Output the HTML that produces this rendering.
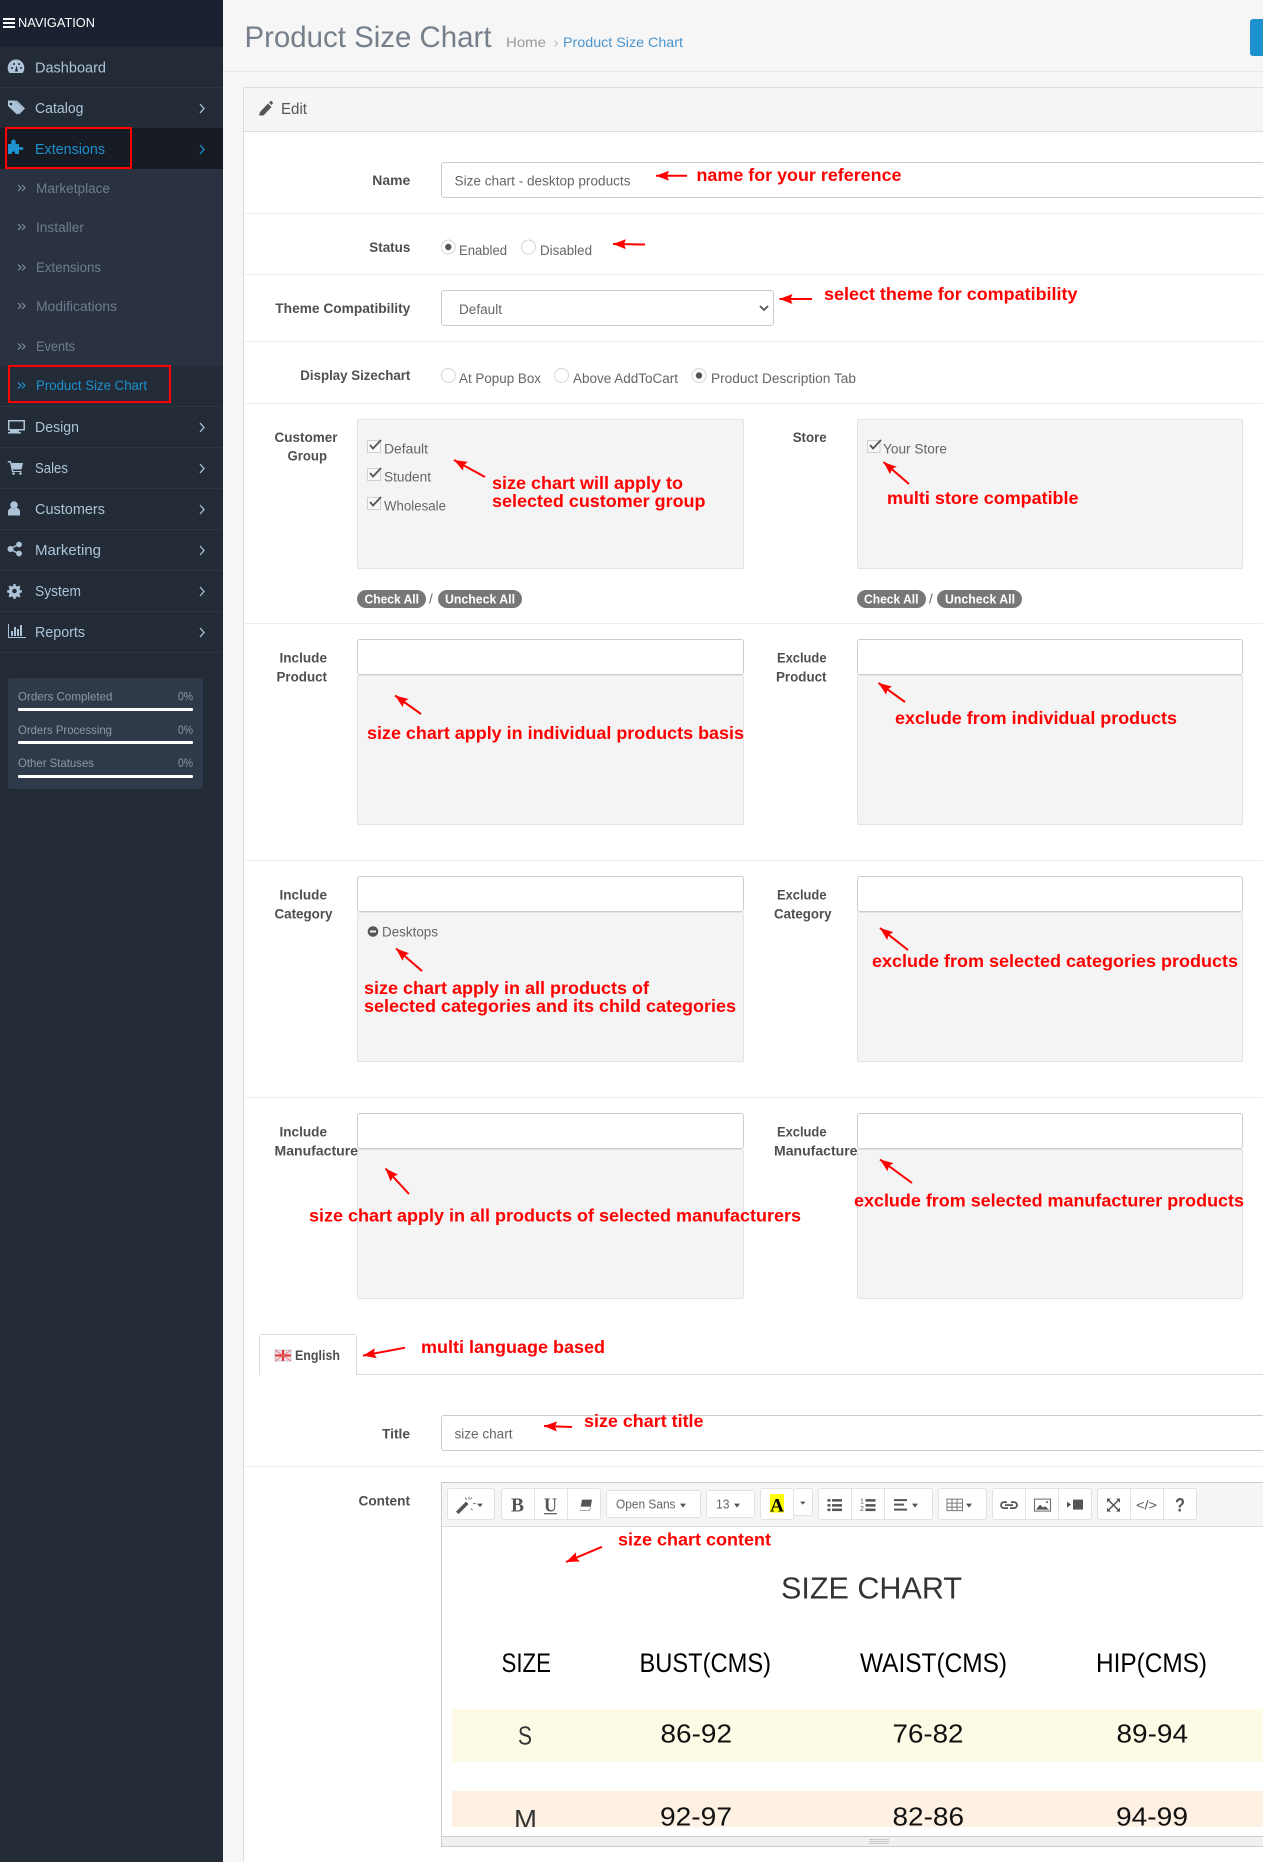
<!DOCTYPE html>
<html><head><meta charset="utf-8"><title>Product Size Chart</title>
<style>
*{box-sizing:border-box}
html,body{margin:0;padding:0}
body{width:1263px;height:1862px;overflow:hidden;position:relative;background:#f6f6f6;font-family:"Liberation Sans",sans-serif}
.a{position:absolute}
.sep{position:absolute;left:0;width:223px;height:1px;background:#2b3643}
.hr{position:absolute;left:244px;right:0;height:1px;background:#ededed}
.in{position:absolute;background:#fff;border:1.5px solid #ccc;border-radius:3px}
.box{position:absolute;background:#f4f4f4;border:1px solid #e3e3e3;border-radius:2px}
.pill{position:absolute;background:#777;border-radius:9px;height:18px;top:590px}
.bar{position:absolute;left:18px;width:175px;height:3px;background:#fff;border-radius:1px}
.tb{position:absolute;background:#fff;border:1px solid #e2e2e2;border-radius:3px}
.dv{position:absolute;width:1px;background:#e2e2e2;top:1489px;height:31px}
#ov{position:absolute;left:0;top:0}
#ov text{font-family:"Liberation Sans",sans-serif}
.m{font-size:15px;fill:#adc4d8}
.s{font-size:13.5px;fill:#6f7c8e}
.st{font-size:12px;fill:#8f98a3}
.lb{font-size:13.5px;font-weight:bold;fill:#4d4f52}
.t{font-size:13.5px;fill:#666}
.r{font-size:17.5px;font-weight:bold;fill:#f00}
.w{font-size:13px;font-weight:bold;fill:#fff}
.h{font-size:27px;fill:#000}
.n{font-size:26px;fill:#111}
</style></head>
<body>
<!-- sidebar -->
<div class="a" style="left:0;top:0;width:223px;height:1862px;background:#222b36"></div>
<div class="a" style="left:0;top:0;width:223px;height:47px;background:#1a2130"></div>
<div class="a" style="left:0;top:128px;width:223px;height:41px;background:#161b24"></div>
<div class="a" style="left:0;top:169px;width:223px;height:197px;background:#2a3242"></div>
<div class="sep" style="top:87px"></div>
<div class="sep" style="top:406px"></div><div class="sep" style="top:447px"></div><div class="sep" style="top:488px"></div>
<div class="sep" style="top:529px"></div><div class="sep" style="top:570px"></div><div class="sep" style="top:611px"></div><div class="sep" style="top:652px"></div>
<div class="a" style="left:8px;top:678px;width:195px;height:111px;background:#2e3a4a;border-radius:3px"></div>
<div class="bar" style="top:708px"></div><div class="bar" style="top:741px"></div><div class="bar" style="top:775px"></div>
<div class="a" style="left:5px;top:127px;width:127px;height:42px;border:2px solid #f00"></div>
<div class="a" style="left:8px;top:365px;width:163px;height:38px;border:2px solid #f00"></div>

<!-- header -->
<div class="a" style="left:223px;top:71px;right:0;height:1px;background:#e6e6e6"></div>
<div class="a" style="left:1250px;top:19px;width:13px;height:37px;background:#1e91cf;border-radius:3px 0 0 3px"></div>

<!-- panel -->
<div class="a" style="left:243px;top:87px;width:1020px;height:1775px;background:#fff;border-left:1.5px solid #ddd;border-top:1px solid #ddd"></div>
<div class="a" style="left:244px;top:88px;width:1019px;height:44px;background:#f5f5f5;border-bottom:1px solid #ddd"></div>
<div class="hr" style="top:213px"></div><div class="hr" style="top:274px"></div><div class="hr" style="top:341px"></div>
<div class="hr" style="top:403px"></div><div class="hr" style="top:623px"></div><div class="hr" style="top:860px"></div>
<div class="hr" style="top:1097px"></div><div class="hr" style="top:1466px"></div>

<div class="in" style="left:441px;top:162px;width:840px;height:36px"></div>
<div class="in" style="left:441px;top:290px;width:333px;height:36px"></div>

<div class="box" style="left:357px;top:419px;width:387px;height:150px"></div>
<div class="box" style="left:857px;top:419px;width:386px;height:150px"></div>
<div class="pill" style="left:357px;width:69px"></div><div class="pill" style="left:438px;width:84px"></div>
<div class="pill" style="left:857px;width:69px"></div><div class="pill" style="left:937px;width:85px"></div>

<div class="box" style="left:357px;top:675px;width:387px;height:150px"></div><div class="in" style="left:357px;top:639px;width:387px;height:36px"></div>
<div class="box" style="left:857px;top:675px;width:386px;height:150px"></div><div class="in" style="left:857px;top:639px;width:386px;height:36px"></div>
<div class="box" style="left:357px;top:912px;width:387px;height:150px"></div><div class="in" style="left:357px;top:876px;width:387px;height:36px"></div>
<div class="box" style="left:857px;top:912px;width:386px;height:150px"></div><div class="in" style="left:857px;top:876px;width:386px;height:36px"></div>
<div class="box" style="left:357px;top:1149px;width:387px;height:150px"></div><div class="in" style="left:357px;top:1113px;width:387px;height:36px"></div>
<div class="box" style="left:857px;top:1149px;width:386px;height:150px"></div><div class="in" style="left:857px;top:1113px;width:386px;height:36px"></div>

<!-- tab -->
<div class="a" style="left:356px;top:1374px;right:0;height:1px;background:#ddd"></div>
<div class="a" style="left:259px;top:1334px;width:98px;height:41px;background:#fff;border:1px solid #ddd;border-bottom:0;border-radius:3px 3px 0 0"></div>

<div class="in" style="left:441px;top:1415px;width:840px;height:36px"></div>

<!-- editor -->
<div class="a" style="left:441px;top:1482px;width:830px;height:365px;background:#fff;border:1.5px solid #ccc"></div>
<div class="a" style="left:442px;top:1483px;width:825px;height:44px;background:#f5f5f5;border-bottom:1px solid #ddd"></div>
<div class="a" style="left:442px;top:1836px;width:825px;height:10px;background:#f0f0f0;border-top:1px solid #ccc"></div>
<div class="tb" style="left:447px;top:1488px;width:48px;height:32px"></div>
<div class="tb" style="left:501px;top:1488px;width:100px;height:32px"></div><div class="dv" style="left:534px"></div><div class="dv" style="left:567px"></div>
<div class="tb" style="left:606px;top:1490px;width:95px;height:28px"></div>
<div class="tb" style="left:706px;top:1490px;width:49px;height:28px"></div>
<div class="tb" style="left:793px;top:1488px;width:20px;height:28px"></div>
<div class="tb" style="left:760px;top:1488px;width:34px;height:32px"></div>
<div class="tb" style="left:818px;top:1488px;width:115px;height:32px"></div><div class="dv" style="left:851px"></div><div class="dv" style="left:884px"></div>
<div class="tb" style="left:938px;top:1488px;width:49px;height:32px"></div>
<div class="tb" style="left:992px;top:1488px;width:100px;height:32px"></div><div class="dv" style="left:1025px"></div><div class="dv" style="left:1058px"></div>
<div class="tb" style="left:1097px;top:1488px;width:100px;height:32px"></div><div class="dv" style="left:1130px"></div><div class="dv" style="left:1163px"></div>

<!-- size chart rows -->
<div class="a" style="left:452px;top:1709px;width:811px;height:53px;background:#fdfbe5"></div>
<div class="a" style="left:452px;top:1791px;width:811px;height:36px;background:#fef0e3"></div>

<svg id="ov" width="1263" height="1862" viewBox="0 0 1263 1862" xmlns="http://www.w3.org/2000/svg">
<defs><marker id="ah" markerUnits="userSpaceOnUse" markerWidth="14" markerHeight="11" refX="13" refY="5" orient="auto"><path d="M13 5L0 0L2 5L0 10z" fill="#f00"/></marker></defs>

<!-- sidebar text -->
<rect x="3" y="18" width="12" height="2" fill="#fff"/><rect x="3" y="22" width="12" height="2" fill="#fff"/><rect x="3" y="26" width="12" height="2" fill="#fff"/>
<text x="18" y="27" font-size="13" fill="#fff" textLength="77" lengthAdjust="spacingAndGlyphs">NAVIGATION</text>
<text class="m" x="35" y="72.6" textLength="71" lengthAdjust="spacingAndGlyphs">Dashboard</text>
<text class="m" x="35" y="113" textLength="48.5" lengthAdjust="spacingAndGlyphs">Catalog</text>
<text class="m" x="35" y="154" textLength="70" lengthAdjust="spacingAndGlyphs" style="fill:#1e91cf">Extensions</text>
<text class="s" x="36" y="193" textLength="74" lengthAdjust="spacingAndGlyphs">Marketplace</text>
<text class="s" x="36" y="232" textLength="48" lengthAdjust="spacingAndGlyphs">Installer</text>
<text class="s" x="36" y="272" textLength="65" lengthAdjust="spacingAndGlyphs">Extensions</text>
<text class="s" x="36" y="311" textLength="81" lengthAdjust="spacingAndGlyphs">Modifications</text>
<text class="s" x="36" y="351" textLength="39" lengthAdjust="spacingAndGlyphs">Events</text>
<text class="s" x="36" y="390" textLength="111" lengthAdjust="spacingAndGlyphs" style="fill:#1e91cf">Product Size Chart</text>
<text class="m" x="35" y="432" textLength="44" lengthAdjust="spacingAndGlyphs">Design</text>
<text class="m" x="35" y="473" textLength="33" lengthAdjust="spacingAndGlyphs">Sales</text>
<text class="m" x="35" y="514" textLength="70" lengthAdjust="spacingAndGlyphs">Customers</text>
<text class="m" x="35" y="555" textLength="66" lengthAdjust="spacingAndGlyphs">Marketing</text>
<text class="m" x="35" y="596" textLength="46" lengthAdjust="spacingAndGlyphs">System</text>
<text class="m" x="35" y="637" textLength="50" lengthAdjust="spacingAndGlyphs">Reports</text>
<text class="st" x="18" y="700.7" textLength="94.5" lengthAdjust="spacingAndGlyphs">Orders Completed</text>
<text class="st" x="178" y="700.7" textLength="15" lengthAdjust="spacingAndGlyphs">0%</text>
<text class="st" x="18" y="734" textLength="94" lengthAdjust="spacingAndGlyphs">Orders Processing</text>
<text class="st" x="178" y="734" textLength="15" lengthAdjust="spacingAndGlyphs">0%</text>
<text class="st" x="18" y="767" textLength="76" lengthAdjust="spacingAndGlyphs">Other Statuses</text>
<text class="st" x="178" y="767" textLength="15" lengthAdjust="spacingAndGlyphs">0%</text>

<!-- sidebar chevrons -->
<g fill="none" stroke="#adc4d8" stroke-width="1.3">
<path d="M200 104l4 4.5l-4 4.5"/><path d="M200 145l4 4.5l-4 4.5" stroke="#1e91cf"/><path d="M200 423l4 4.5l-4 4.5"/><path d="M200 464l4 4.5l-4 4.5"/><path d="M200 505l4 4.5l-4 4.5"/><path d="M200 546l4 4.5l-4 4.5"/><path d="M200 587l4 4.5l-4 4.5"/><path d="M200 628l4 4.5l-4 4.5"/>
</g>
<!-- sub chevrons -->
<g fill="none" stroke="#7f8b9c" stroke-width="1.2">
<path d="M18 185l3 3l-3 3M22 185l3 3l-3 3"/><path d="M18 224l3 3l-3 3M22 224l3 3l-3 3"/><path d="M18 264.5l3 3l-3 3M22 264.5l3 3l-3 3"/><path d="M18 303l3 3l-3 3M22 303l3 3l-3 3"/><path d="M18 343.5l3 3l-3 3M22 343.5l3 3l-3 3"/>
<path d="M18 382.5l3 3l-3 3M22 382.5l3 3l-3 3" stroke="#1e91cf"/>
</g>
<!-- sidebar icons -->
<g fill="#adc4d8">
<path d="M9.5 73A8.3 8.3 0 1 1 22.5 73z"/><circle cx="12" cy="68" r="1" fill="#222b36"/><circle cx="14" cy="64" r="1" fill="#222b36"/><circle cx="19" cy="64" r="1" fill="#222b36"/><circle cx="21" cy="68" r="1" fill="#222b36"/><path d="M15 71.5l1.5-6l1.5 6z" fill="#222b36"/>
<path d="M8 100.5h7l8 8l-6 6l-9-8.5z"/><path d="M17 100.5l8 8l-6 6l-1-1l5-5l-7.5-8z"/><circle cx="11" cy="104" r="1.3" fill="#222b36"/>
<path d="M8 144h3.500c-1-3 .5-4.500 2-4.500s3 1.500 2 4.500h3.500v3.500c2-1 4.500-.5 4.500 1s-2.500 2-4.500 1v4.500h-4c.5-1.500-.5-2.500-1.500-2.500s-2 1-1.500 2.500h-4z" fill="#1e91cf"/>
<path d="M8 420h17v10.500h-6v1.500h2v1.500h-13v-1.500h2v-1.500h-2z"/><rect x="9.500" y="421.500" width="14" height="7.500" fill="#222b36"/>
<path d="M8 461h3l.6 2h11.400l-1.500 6.500h-8.500l.4 1.500h8.100v1h-9.500l-2-9.500h-2.500z"/><circle cx="13.500" cy="473.500" r="1.300"/><circle cx="20.500" cy="473.500" r="1.300"/>
<circle cx="14" cy="505" r="3.800"/><path d="M8 515v-3.500c0-2 2-3.500 3.500-3.500l2.500 1l2.500-1c1.500 0 3.500 1.500 3.500 3.500v3.500q0 .5-1 .5h-10q-1 0-1-.5z"/>
<circle cx="10.500" cy="549" r="3"/><circle cx="19" cy="544.500" r="2.900"/><circle cx="19" cy="553.500" r="2.900"/><path d="M10 548l9-4.500l.6 1.200l-9 4.500zM10 550l9 4.500l.6-1.200l-9-4.500z"/>
<path d="M13.500 584h2l.4 2l1.500.6l1.700-1.100l1.400 1.400l-1.100 1.700l.6 1.500l2 .4v2l-2 .4l-.6 1.500l1.100 1.700l-1.400 1.400l-1.700-1.100l-1.500.6l-.4 2h-2l-.4-2l-1.500-.6l-1.700 1.100l-1.400-1.400l1.100-1.700l-.6-1.500l-2-.4v-2l2-.4l.6-1.500l-1.100-1.700l1.400-1.400l1.700 1.100l1.500-.6z"/><circle cx="14.500" cy="591" r="2.300" fill="#222b36"/>
<path d="M8 624h1v13h17v1h-18z"/><rect x="11" y="631" width="2" height="5"/><rect x="14" y="627" width="2" height="9"/><rect x="17" y="629" width="2" height="7"/><rect x="20" y="625" width="2" height="11"/>
</g>

<!-- header text -->
<text x="244.500" y="47" font-size="30" fill="#75808c" textLength="247" lengthAdjust="spacingAndGlyphs">Product Size Chart</text>
<text x="506" y="47" font-size="14" fill="#999" textLength="40" lengthAdjust="spacingAndGlyphs">Home</text>
<path d="M554.500 40.500l3 3l-3 3" fill="none" stroke="#bbb"/>
<text x="563" y="47" font-size="14" fill="#4a95cf" textLength="120" lengthAdjust="spacingAndGlyphs">Product Size Chart</text>
<path d="M259 115.500l1-3.500l8-8.500l3.500 3.500l-8 8.500zM269 102.500l1-1c1-1 2-.5 2.500.5s.5 1.500-.5 2.500l-.5.5z" fill="#555"/>
<text x="281" y="114" font-size="15.500" fill="#555" textLength="26" lengthAdjust="spacingAndGlyphs">Edit</text>

<!-- labels -->
<text class="lb" x="372.300" y="185" textLength="38" lengthAdjust="spacingAndGlyphs">Name</text>
<text class="lb" x="369.300" y="252" textLength="41" lengthAdjust="spacingAndGlyphs">Status</text>
<text class="lb" x="275.300" y="313" textLength="135" lengthAdjust="spacingAndGlyphs">Theme Compatibility</text>
<text class="lb" x="300.300" y="380" textLength="110" lengthAdjust="spacingAndGlyphs">Display Sizechart</text>
<text class="lb" x="274.500" y="442" textLength="63" lengthAdjust="spacingAndGlyphs">Customer</text>
<text class="lb" x="287.500" y="460.500" textLength="39.500" lengthAdjust="spacingAndGlyphs">Group</text>
<text class="lb" x="792.700" y="442" textLength="34" lengthAdjust="spacingAndGlyphs">Store</text>
<text class="lb" x="279.500" y="662.700" textLength="47.500" lengthAdjust="spacingAndGlyphs">Include</text>
<text class="lb" x="276.500" y="681.700" textLength="50.500" lengthAdjust="spacingAndGlyphs">Product</text>
<text class="lb" x="777" y="662.700" textLength="49.500" lengthAdjust="spacingAndGlyphs">Exclude</text>
<text class="lb" x="776" y="681.700" textLength="50.500" lengthAdjust="spacingAndGlyphs">Product</text>
<text class="lb" x="279.500" y="899.300" textLength="47.500" lengthAdjust="spacingAndGlyphs">Include</text>
<text class="lb" x="274.500" y="918.300" textLength="58" lengthAdjust="spacingAndGlyphs">Category</text>
<text class="lb" x="777" y="899.300" textLength="49.500" lengthAdjust="spacingAndGlyphs">Exclude</text>
<text class="lb" x="774" y="918.300" textLength="57.500" lengthAdjust="spacingAndGlyphs">Category</text>
<text class="lb" x="279.500" y="1136.700" textLength="47.500" lengthAdjust="spacingAndGlyphs">Include</text>
<text class="lb" x="274.500" y="1155.700" textLength="83.500" lengthAdjust="spacingAndGlyphs">Manufacture</text>
<text class="lb" x="777" y="1136.700" textLength="49.500" lengthAdjust="spacingAndGlyphs">Exclude</text>
<text class="lb" x="774" y="1155.700" textLength="83.500" lengthAdjust="spacingAndGlyphs">Manufacture</text>
<text class="lb" x="295" y="1360" textLength="45" lengthAdjust="spacingAndGlyphs">English</text>
<text class="lb" x="382" y="1438.600" textLength="28" lengthAdjust="spacingAndGlyphs">Title</text>
<text class="lb" x="358.500" y="1505.600" textLength="51.500" lengthAdjust="spacingAndGlyphs">Content</text>

<!-- field text -->
<text class="t" x="454.500" y="185.300" textLength="176" lengthAdjust="spacingAndGlyphs">Size chart - desktop products</text>
<text class="t" x="459" y="255" textLength="48" lengthAdjust="spacingAndGlyphs">Enabled</text>
<text class="t" x="540" y="255" textLength="52" lengthAdjust="spacingAndGlyphs">Disabled</text>
<text class="t" x="459" y="314" textLength="43" lengthAdjust="spacingAndGlyphs">Default</text>
<text class="t" x="459" y="383" textLength="82" lengthAdjust="spacingAndGlyphs">At Popup Box</text>
<text class="t" x="573" y="383" textLength="105" lengthAdjust="spacingAndGlyphs">Above AddToCart</text>
<text class="t" x="711" y="383" textLength="145" lengthAdjust="spacingAndGlyphs">Product Description Tab</text>
<text class="t" x="384" y="453.300" textLength="44" lengthAdjust="spacingAndGlyphs">Default</text>
<text class="t" x="384" y="481.700" textLength="47" lengthAdjust="spacingAndGlyphs">Student</text>
<text class="t" x="384" y="510.300" textLength="62" lengthAdjust="spacingAndGlyphs">Wholesale</text>
<text class="t" x="883" y="453.300" textLength="64" lengthAdjust="spacingAndGlyphs">Your Store</text>
<text class="t" x="382" y="936.700" textLength="56" lengthAdjust="spacingAndGlyphs">Desktops</text>
<text class="t" x="454.500" y="1438.600" textLength="58" lengthAdjust="spacingAndGlyphs">size chart</text>
<text class="w" x="364.500" y="603.300" textLength="54.500" lengthAdjust="spacingAndGlyphs">Check All</text>
<text class="t" x="429" y="603.300">/</text>
<text class="w" x="445" y="603.300" textLength="70" lengthAdjust="spacingAndGlyphs">Uncheck All</text>
<text class="w" x="864" y="603.300" textLength="54.500" lengthAdjust="spacingAndGlyphs">Check All</text>
<text class="t" x="929" y="603.300">/</text>
<text class="w" x="945" y="603.300" textLength="70" lengthAdjust="spacingAndGlyphs">Uncheck All</text>

<!-- radios -->
<g fill="#fff" stroke="#d5d5d5">
<circle cx="448.300" cy="247" r="7"/><circle cx="528.500" cy="247" r="7"/><circle cx="448.300" cy="375.500" r="7"/><circle cx="561.500" cy="375.500" r="7"/><circle cx="699" cy="375.500" r="7"/>
</g>
<circle cx="448.300" cy="247" r="3.200" fill="#555"/><circle cx="699" cy="375.500" r="3.200" fill="#555"/>
<!-- select chevron -->
<path d="M760 306l4 4l4-4" fill="none" stroke="#555" stroke-width="1.800"/>

<!-- checkboxes -->
<g fill="#f8f8f8" stroke="#d0d0d0"><rect x="367.500" y="440.500" width="13" height="12"/><rect x="367.500" y="468.500" width="13" height="12"/><rect x="367.500" y="497.500" width="13" height="12"/><rect x="867.500" y="440.500" width="12.500" height="12"/></g>
<g fill="none" stroke="#555" stroke-width="1.800"><path d="M370 445l3 3.500l8-8.500"/><path d="M370 473l3 3.500l8-8.500"/><path d="M370 502l3 3.500l8-8.500"/><path d="M870 445l3 3.500l8-8.500"/></g>
<circle cx="373" cy="931.500" r="5.300" fill="#555"/><rect x="370" y="930.500" width="6" height="2" fill="#f4f4f4"/>

<!-- flag -->
<rect x="275" y="1350" width="16" height="11" fill="#f3dfe6" stroke="#aab" stroke-width=".6"/><path d="M275 1355.500h16M283 1350v11" stroke="#d33" stroke-width="2"/><path d="M275 1350l16 11M291 1350l-16 11" stroke="#d77" stroke-width=".8"/>

<!-- red annotations -->
<g stroke="#f00" stroke-width="2" fill="none">
<line x1="687" y1="175.700" x2="656" y2="175.700" marker-end="url(#ah)"/>
<line x1="645" y1="244.500" x2="613" y2="244" marker-end="url(#ah)"/>
<line x1="812" y1="299" x2="779.500" y2="299" marker-end="url(#ah)"/>
<line x1="485" y1="477" x2="454" y2="460" marker-end="url(#ah)"/>
<line x1="909" y1="484" x2="883.500" y2="462" marker-end="url(#ah)"/>
<line x1="421" y1="714" x2="395" y2="695.500" marker-end="url(#ah)"/>
<line x1="905" y1="702" x2="878.500" y2="683" marker-end="url(#ah)"/>
<line x1="422" y1="971" x2="396" y2="948.500" marker-end="url(#ah)"/>
<line x1="908" y1="950" x2="880" y2="928" marker-end="url(#ah)"/>
<line x1="409" y1="1194" x2="385.500" y2="1168.500" marker-end="url(#ah)"/>
<line x1="912" y1="1183" x2="880" y2="1159.500" marker-end="url(#ah)"/>
<line x1="405" y1="1347.700" x2="363" y2="1355.600" marker-end="url(#ah)"/>
<line x1="572" y1="1427" x2="544" y2="1426" marker-end="url(#ah)"/>
<line x1="602" y1="1546.800" x2="566" y2="1562" marker-end="url(#ah)"/>
</g>
<text class="r" x="696.500" y="181" textLength="205" lengthAdjust="spacingAndGlyphs">name for your reference</text>
<text class="r" x="824" y="300" textLength="253.500" lengthAdjust="spacingAndGlyphs">select theme for compatibility</text>
<text class="r" x="492" y="489" textLength="191" lengthAdjust="spacingAndGlyphs">size chart will apply to</text>
<text class="r" x="492" y="507" textLength="213.500" lengthAdjust="spacingAndGlyphs">selected customer group</text>
<text class="r" x="887" y="504" textLength="191.500" lengthAdjust="spacingAndGlyphs">multi store compatible</text>
<text class="r" x="367" y="739" textLength="377" lengthAdjust="spacingAndGlyphs">size chart apply in individual products basis</text>
<text class="r" x="895" y="724" textLength="282" lengthAdjust="spacingAndGlyphs">exclude from individual products</text>
<text class="r" x="364" y="994" textLength="285" lengthAdjust="spacingAndGlyphs">size chart apply in all products of</text>
<text class="r" x="364" y="1012" textLength="372" lengthAdjust="spacingAndGlyphs">selected categories and its child categories</text>
<text class="r" x="872" y="967" textLength="366" lengthAdjust="spacingAndGlyphs">exclude from selected categories products</text>
<text class="r" x="309" y="1221.700" textLength="492" lengthAdjust="spacingAndGlyphs">size chart apply in all products of selected manufacturers</text>
<text class="r" x="854" y="1206.700" textLength="390" lengthAdjust="spacingAndGlyphs">exclude from selected manufacturer products</text>
<text class="r" x="421" y="1352.800" textLength="184" lengthAdjust="spacingAndGlyphs">multi language based</text>
<text class="r" x="584" y="1427.200" textLength="119.500" lengthAdjust="spacingAndGlyphs">size chart title</text>
<text class="r" x="618" y="1545.400" textLength="153" lengthAdjust="spacingAndGlyphs">size chart content</text>

<!-- toolbar -->
<g fill="#555" transform="translate(0 6.6)">
<path d="M456 1505l10-10l2.500 2.500l-10 10z"/><path d="M469 1490v3M465 1491l2 2M472 1491l-1.500 1.500M473 1497h3M471 1502l1.500 1.500" stroke="#777" fill="none"/><path d="M477 1497h6l-3 3.500z"/>
<text x="511" y="1505" font-size="20" font-weight="bold" style="font-family:'Liberation Serif',serif" textLength="13" lengthAdjust="spacingAndGlyphs">B</text>
<text x="544" y="1505" font-size="20" font-weight="bold" style="font-family:'Liberation Serif',serif" textLength="13" lengthAdjust="spacingAndGlyphs">U</text><rect x="544" y="1506.500" width="13" height="1.200"/>
<path d="M580 1504l2-11h10l-2 11z"/><path d="M580.800 1500h9.500l-.8 3.500h-9.300z" fill="#fff"/>
<text x="616" y="1502" font-size="13" fill="#666" textLength="59.500" lengthAdjust="spacingAndGlyphs">Open Sans</text><path d="M680 1497h6l-3 4z"/>
<text x="716" y="1502" font-size="13" fill="#666" textLength="13.500" lengthAdjust="spacingAndGlyphs">13</text><path d="M734 1497h6l-3 4z"/>
<rect x="770" y="1487.500" width="14" height="18.500" fill="#ff0"/>
<text x="770" y="1505" font-size="19" font-weight="bold" fill="#000" style="font-family:'Liberation Serif',serif" textLength="14" lengthAdjust="spacingAndGlyphs">A</text>
<path d="M800 1495h5.500l-2.750 3z"/>
<rect x="827.500" y="1492.500" width="3" height="2.500"/><rect x="832" y="1492.500" width="10" height="2.500"/><rect x="827.500" y="1497.500" width="3" height="2.500"/><rect x="832" y="1497.500" width="10" height="2.500"/><rect x="827.500" y="1502" width="3" height="2.500"/><rect x="832" y="1502" width="10" height="2.500"/>
<text x="860" y="1497" font-size="7">1</text><text x="860" y="1504.500" font-size="7">2</text><rect x="865.500" y="1492.500" width="10" height="2.500"/><rect x="865.500" y="1497.500" width="10" height="2.500"/><rect x="865.500" y="1502" width="10" height="2.500"/>
<rect x="894" y="1492.500" width="13" height="2"/><rect x="894" y="1497" width="10" height="2"/><rect x="894" y="1502" width="13" height="2"/><path d="M912 1497h6l-3 4z"/>
<path d="M947 1492.500h15.500v11.500h-15.500zM952 1492.500v11.500M957 1492.500v11.500M947 1496.500h15.500M947 1500.500h15.500" fill="none" stroke="#777"/><path d="M966 1497h6l-3 4z"/>
<path d="M1007 1495.500h-3a3 3 0 0 0 0 6h4M1011 1495.500h3a3 3 0 0 1 0 6h-4M1005 1498.500h8" fill="none" stroke="#555" stroke-width="1.800"/>
<rect x="1034.500" y="1492.500" width="16" height="12" fill="none" stroke="#666"/><path d="M1036 1503l4-5l3 3l2-1.500l4 3.500z"/><circle cx="1047" cy="1495.500" r="1"/>
<rect x="1073" y="1493" width="10" height="10"/><path d="M1067 1495v6l4-3z"/>
<path d="M1108.500 1493.500l10 10M1118.500 1493.500l-10 10" stroke="#555" stroke-width="1.500" fill="none"/><path d="M1107 1492h4l-4 4zM1120 1492h-4l4 4zM1107 1505h4l-4-4zM1120 1505h-4l4-4z"/>
<text x="1136" y="1503" font-size="13" fill="#555" textLength="21" lengthAdjust="spacingAndGlyphs">&lt;/&gt;</text>
<text x="1175" y="1505" font-size="19" font-weight="bold" fill="#555" textLength="10" lengthAdjust="spacingAndGlyphs">?</text>
</g>
<path d="M869 1839.500h20M869 1841.500h20M869 1843.500h20" stroke="#c8c8c8" fill="none"/>

<!-- size chart -->
<text x="781" y="1598.300" font-size="30.500" fill="#333" textLength="181" lengthAdjust="spacingAndGlyphs">SIZE CHART</text>
<text class="h" x="501.500" y="1672" textLength="49.500" lengthAdjust="spacingAndGlyphs">SIZE</text>
<text class="h" x="639.500" y="1672" textLength="131.500" lengthAdjust="spacingAndGlyphs">BUST(CMS)</text>
<text class="h" x="860" y="1672" textLength="147" lengthAdjust="spacingAndGlyphs">WAIST(CMS)</text>
<text class="h" x="1096" y="1672" textLength="111" lengthAdjust="spacingAndGlyphs">HIP(CMS)</text>
<text class="n" x="518" y="1744.500" textLength="14" lengthAdjust="spacingAndGlyphs" style="fill:#333">S</text>
<text class="n" x="660.500" y="1742.500" textLength="71.500" lengthAdjust="spacingAndGlyphs">86-92</text>
<text class="n" x="892.500" y="1742.500" textLength="71" lengthAdjust="spacingAndGlyphs">76-82</text>
<text class="n" x="1116.500" y="1742.500" textLength="71.500" lengthAdjust="spacingAndGlyphs">89-94</text>
<clipPath id="cp"><rect x="452" y="1791" width="811" height="36"/></clipPath>
<g clip-path="url(#cp)">
<text class="n" x="514" y="1828" textLength="23" lengthAdjust="spacingAndGlyphs" style="fill:#333">M</text>
<text class="n" x="660" y="1825.500" textLength="72" lengthAdjust="spacingAndGlyphs">92-97</text>
<text class="n" x="892.500" y="1825.500" textLength="71.500" lengthAdjust="spacingAndGlyphs">82-86</text>
<text class="n" x="1116" y="1825.500" textLength="72" lengthAdjust="spacingAndGlyphs">94-99</text>
</g>
</svg>
</body></html>
